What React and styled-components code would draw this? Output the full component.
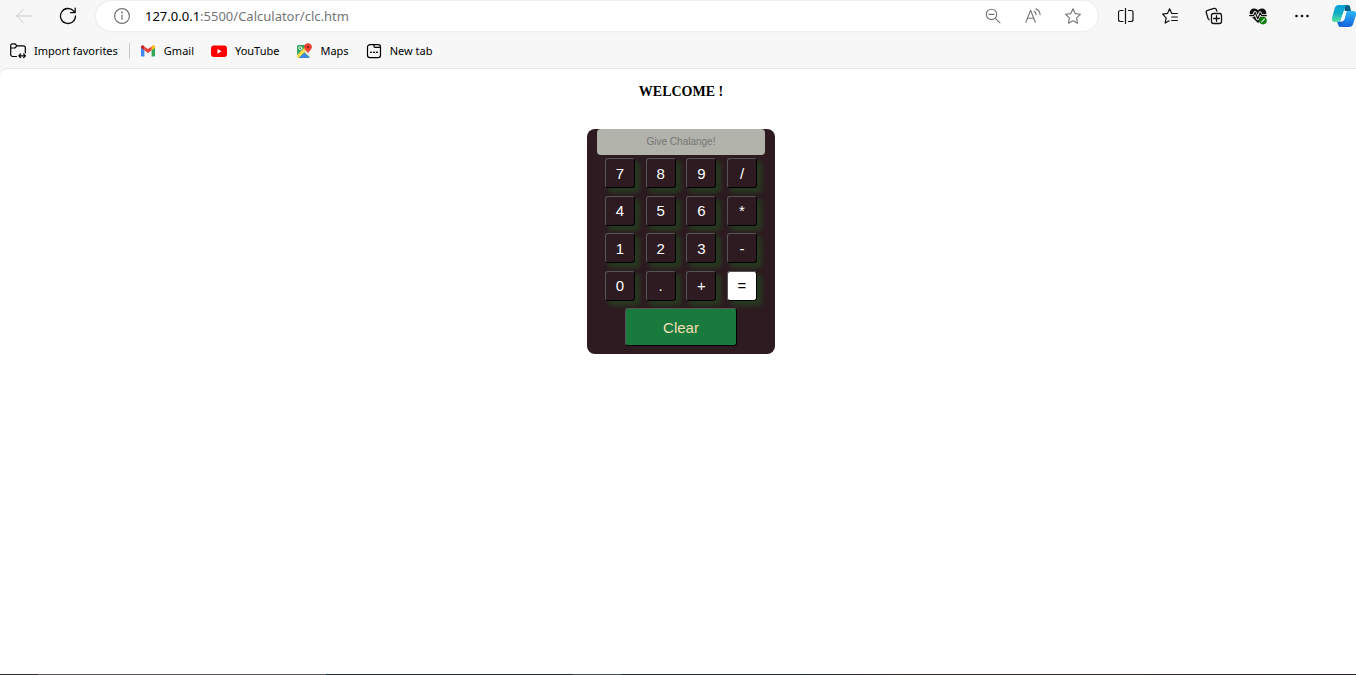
import React, { useState } from "react";
import styled, { createGlobalStyle, css } from "styled-components";

const GlobalStyle = createGlobalStyle`
  *, *::before, *::after { box-sizing: border-box; }
  html, body { margin: 0; height: 100%; }
  #root { height: 100%; }
  button, input { font: inherit; color: inherit; }
`;

const uiFont = css`
  font-family: "Segoe UI", "Noto Sans", "Open Sans", sans-serif;
`;

const Browser = styled.div`
  ${uiFont}
  min-height: 100%;
  display: flex;
  flex-direction: column;
  background: #f7f7f7;
  color: #000;
  overflow: hidden;
`;

const Toolbar = styled.header`
  display: flex;
  align-items: center;
  height: 32px;
  padding-left: 2px;
`;

const IconButton = styled.button`
  display: flex;
  align-items: center;
  justify-content: center;
  flex: none;
  width: ${(p) => p.$width || 44}px;
  height: 28px;
  padding: 0;
  border: 0;
  background: none;
  color: ${(p) => p.$color || "#111"};
`;

const AddressBar = styled.div`
  display: flex;
  align-items: center;
  flex: 1;
  min-width: 0;
  height: 30px;
  margin: 0 6px;
  padding: 0 5px 0 17px;
  border-radius: 15px;
  background: #fff;
  box-shadow: 0 0 3px rgba(0, 0, 0, 0.1);
`;

const Url = styled.a`
  flex: 1;
  min-width: 0;
  margin-left: 14px;
  font-size: 13px;
  line-height: 18px;
  color: #757575;
  text-decoration: none;
  white-space: nowrap;
`;

const Host = styled.span`
  color: #000;
`;

const CopilotButton = styled(IconButton)`
  width: 32px;
  padding-left: 8px;
`;

const Favorites = styled.nav`
  display: flex;
  align-items: center;
  gap: 17px;
  height: 36px;
  padding: 2px 10px 0;
`;

const Favorite = styled.a`
  display: flex;
  align-items: center;
  gap: 8px;
  font-size: 11px;
  line-height: 16px;
  color: #000;
  text-decoration: none;
  white-space: nowrap;
`;

const Divider = styled.span`
  width: 1px;
  height: 16px;
  margin: 0 -7px 0 -6px;
  background: #c8c8c8;
`;

const Page = styled.main`
  flex: 1;
  display: flex;
  flex-direction: column;
  align-items: center;
  padding: 15px 0 24px 6px;
  border-top: 1px solid #e6e6e6;
  border-top-left-radius: 8px;
  background: #fff;
`;

const Welcome = styled.h1`
  margin: 0 0 29px;
  font: bold 14px/16px "Liberation Serif", "Times New Roman", serif;
`;

const Calculator = styled.form`
  display: flex;
  flex-direction: column;
  align-items: center;
  width: 188px;
  padding-bottom: 8px;
  border-radius: 8px;
  background: #2d1b21;
  font-family: "Liberation Sans", Arial, sans-serif;
`;

const Display = styled.input`
  width: 168px;
  height: 26px;
  padding: 0 4px 2px;
  border: 0;
  border-radius: 4px;
  background: #b1b2aa;
  color: #222;
  font-size: 10px;
  text-align: center;
  outline: none;
  &::placeholder {
    color: #757575;
    opacity: 1;
  }
`;

const Keypad = styled.div`
  display: grid;
  grid-template-columns: repeat(4, 30px);
  grid-auto-rows: 30px;
  justify-content: space-between;
  align-content: space-between;
  width: 152px;
  height: 143px;
  margin: 3px 0 7px;
`;

const Key = styled.button`
  padding: 1px 0 0;
  border: 1px solid;
  border-color: #555 #000 #000 #555;
  border-radius: 3px;
  background: ${(p) => (p.$light ? "#fff" : "#2d1b21")};
  color: ${(p) => (p.$light ? "#000" : "#fff")};
  box-shadow: 4px 4px 4px 1px #273820;
  font-size: 15px;
  line-height: 18px;
`;

const ClearKey = styled(Key)`
  width: 112px;
  height: 38px;
  background: #187a3d;
  color: #f5deb3;
  box-shadow: none;
`;

const Taskbar = styled.footer`
  height: 1px;
  background: linear-gradient(
    90deg,
    #302c2e 0 38px,
    #5b5859 38px 326px,
    #1d2c30 326px 573px,
    #455257 573px 621px,
    #1d2c30 621px 800px,
    #38262a 900px 1120px,
    #242126 100%
  );
`;

function Icon({ size = 16, box = 16, children, ...rest }) {
  return (
    <svg
      width={size}
      height={size}
      viewBox={`0 0 ${box} ${box}`}
      fill="none"
      stroke="currentColor"
      strokeWidth="1"
      strokeLinecap="round"
      strokeLinejoin="round"
      aria-hidden="true"
      {...rest}
    >
      {children}
    </svg>
  );
}

const BackIcon = () => (
  <Icon>
    <path d="M15.5 8H.8M7.2 1.5.7 8l6.5 6.5" />
  </Icon>
);

const RefreshIcon = () => (
  <Icon size={18} box={18} strokeWidth="1.3">
    <path d="M16.5 9A7.5 7.5 0 1 1 14.6 4L16 5.5M16.2 1.2v4.5h-4.6" />
  </Icon>
);

const InfoIcon = () => (
  <Icon size={18} box={18} stroke="#757575" strokeWidth="1.2">
    <circle cx="9" cy="9" r="7.4" />
    <path d="M9 8.2v4.2" />
    <circle cx="9" cy="5.6" r=".4" fill="#757575" />
  </Icon>
);

const ZoomOutIcon = () => (
  <Icon strokeWidth="1.1">
    <circle cx="6.5" cy="6.4" r="5.2" />
    <path d="m10.4 10.3 4.6 4.5M4 6.4h5" />
  </Icon>
);

const ReadAloudIcon = () => (
  <Icon strokeWidth="1.1">
    <path d="m.9 14.2 4.7-12 4.7 12M2.5 10.2h6.2M9.2 3.3c1.3.8 1.8 1.8 1.9 3.3M11 .8c2.6 1.5 4 3.6 4.1 6" />
  </Icon>
);

const StarIcon = () => (
  <Icon strokeWidth="1.1">
    <path d="m8 .8 2.2 4.8 5.2.7-3.8 3.6.9 5.3L8 12.7l-4.5 2.5.9-5.3L.6 6.3l5.2-.7L8 .8Z" />
  </Icon>
);

const SplitIcon = () => (
  <Icon strokeWidth="1.2">
    <path d="M7.5 .5v15M5 2.5H2.5C1.3 2.5.5 3.3.5 4.5v7c0 1.2.8 2 2 2H5M10.500 2.500h2.500c1.200 0 2 .8 2 2v7c0 1.200-.8 2-2 2h-2.500" />
  </Icon>
);

const FavoritesIcon = () => (
  <Icon strokeWidth="1.2">
    <path d="M9.700 5.200 7.600.8 5.500 5.400.6 6.200l3.500 3.600-.9 5.300 4-2.300M9.700 5.500h5.700M9.700 9h5.700M9.700 12.500h5.700" />
  </Icon>
);

const CollectionsIcon = () => (
  <Icon size={18} box={18} strokeWidth="1.3">
    <rect x="6.500" y="6.500" width="10" height="10" rx="2" />
    <path d="M11.500 8.700v5.600M8.700 11.500h5.600M4.100 12.600A3 3 0 0 1 2.600 10L1.300 5.600c-.3-1.100.2-1.900 1.300-2.200l6.500-2c1.100-.3 2 .2 2.300 1.200l.5 1.600" />
  </Icon>
);

const EssentialsIcon = () => (
  <Icon size={18} box={18} stroke="none">
    <path
      d="M9 16 2 9.200C-.5 6.600.7 2.400 4.200 1.600 6.100 1.100 7.900 1.800 9 3.300c1.100-1.500 2.900-2.200 4.800-1.700 3.500.8 4.700 5 2.200 7.600L9 16Z"
      fill="#111"
    />
    <path d="M0 8.800h4.200l1.900-3.300 2.600 6.300 2.400-6 1.500 3H18" stroke="#f7f7f7" strokeWidth="3" />
    <path d="M.6 8.600h3.900l1.700-3.100 2.600 6.300 2.400-6 1.500 2.800h4.700" stroke="#111" strokeWidth="1.200" />
    <circle cx="14" cy="13.600" r="3.800" fill="#107c10" />
    <path d="m12.700 14.800 2.700-2.700" stroke="#d6efd6" strokeWidth="1.200" />
  </Icon>
);

const MoreIcon = () => (
  <Icon stroke="none" fill="currentColor">
    <circle cx="2.500" cy="8" r="1.300" />
    <circle cx="8" cy="8" r="1.300" />
    <circle cx="13.500" cy="8" r="1.300" />
  </Icon>
);

const CopilotIcon = () => (
  <Icon size={24} box={24} stroke="none">
    <defs>
      <linearGradient id="copilotLeft" x1="0" y1="0" x2="0" y2="1">
        <stop stopColor="#0c9fdc" />
        <stop offset=".5" stopColor="#13aec4" />
        <stop offset="1" stopColor="#5be39a" />
      </linearGradient>
      <linearGradient id="copilotRight" x1="0" y1="0" x2="0" y2="1">
        <stop stopColor="#2cb9f4" />
        <stop offset="1" stopColor="#1461dd" />
      </linearGradient>
    </defs>
    <path d="M12 1h4c1.200 0 1.700.7 2 1.800L19.300 8H13Z" fill="#0b5f86" />
    <path d="M7 1h8.500c-1.500.4-2.200 1.500-2.700 3L9 15.500C8.400 17.300 7.300 18 5.500 18H3C.7 18-.6 16.500 0 14L2.800 4C3.400 2 4.800 1 7 1Z" fill="url(#copilotLeft)" />
    <path d="M5 18c2 0 3.200-.5 4-2.500h5L11.500 20c-.6 2-1.500 3-3 3-1.200 0-1.800-.7-2.100-1.800Z" fill="#1767d2" />
    <path d="M16 7h5c2.300 0 3.600 1.500 3 4l-2.900 9c-.6 2-2.100 3-4.300 3H8.500c1.500-.4 2.200-1.500 2.700-3L13.800 10c.5-2 .8-3 2.200-3Z" fill="url(#copilotRight)" />
    <path d="M11.400 8.500c.3-1 .9-1.500 2-1.500H16c-1.400 0-1.700 1-2.200 3l-1.600 5.500c-.4 1.200-1 1.700-2 1.900H7.600c.7-.5 1.100-1.100 1.400-1.900Z" fill="#fff" />
  </Icon>
);

const ImportIcon = () => (
  <Icon strokeWidth="1.2">
    <path d="M6.500 13.500H2.700A2 2 0 0 1 .7 11.500v-9a1.600 1.600 0 0 1 1.600-1.700h2.500L7 2.800h6.300a2 2 0 0 1 2 2v5M.9 5h4L7 2.800M9 12.800h6.300M10.500 11 8.800 12.800l1.700 1.800M13.700 11l1.700 1.800-1.700 1.800" />
  </Icon>
);

const GmailIcon = () => (
  <Icon stroke="none">
    <path d="M1 4.500v8c0 .6.400 1 1 1h2.400V7L1 4.500Z" fill="#4285f4" />
    <path d="M15 4.500v8c0 .6-.4 1-1 1h-2.400V7L15 4.500Z" fill="#34a853" />
    <path d="M11.600 3.500V7.300L15 4.800V4c0-1.400-1.500-2.100-2.600-1.300Z" fill="#fbbc04" />
    <path d="M4.400 7.300V3.400L8 6.100l3.600-2.700v3.900L8 10 4.400 7.300Z" fill="#ea4335" />
    <path d="M1 4v.8l3.400 2.500V3.400l-.8-.7C2.500 1.900 1 2.600 1 4Z" fill="#c5221f" />
  </Icon>
);

const YouTubeIcon = () => (
  <Icon stroke="none">
    <rect y="2.500" width="16" height="11.500" rx="3" fill="#f00" />
    <path d="m6.500 5.900 4.100 2.400-4.100 2.400V5.900Z" fill="#fff" />
  </Icon>
);

const MapsIcon = () => (
  <Icon stroke="none">
    <rect x="1" y="2" width="13" height="13" rx="1.500" fill="#34a460" />
    <path d="M1 14V12L11 2l3 3v1L8.200 9.500 2.600 15H2c-.6 0-1-.4-1-1Z" fill="#fddc4b" />
    <path d="m8.100 9.100 5.900 5.400V5.500L8.100 9.100Z" fill="#e8eaed" />
    <path d="m3 15 5.100-5 5.100 5H3Z" fill="#4285f4" />
    <circle cx="4.300" cy="5.200" r="1.500" stroke="#fff" strokeWidth=".9" />
    <path d="M12 .3c2.200 0 3.900 1.600 3.900 3.700 0 2.700-3 3.600-3.900 6.500-.9-2.900-3.900-3.800-3.900-6.500C8.100 1.900 9.800.3 12 .3Z" fill="#ea4335" />
    <circle cx="12" cy="4" r="1.300" fill="#9c221a" />
  </Icon>
);

const NewTabIcon = () => (
  <Icon strokeWidth="1.200">
    <rect x="1.500" y="1.600" width="13" height="13" rx="2.400" />
    <path d="M8 1.800v1.500c0 .6.400 1 1 1h5.300" />
    <path d="M4.700 9.300h.6M7.700 9.300h.6M10.700 9.300h.6" strokeWidth="1.500" />
  </Icon>
);

const favorites = [
  { label: "Gmail", icon: GmailIcon },
  { label: "YouTube", icon: YouTubeIcon },
  { label: "Maps", icon: MapsIcon },
  { label: "New tab", icon: NewTabIcon },
];

const addressActions = [
  { label: "Zoom out", icon: ZoomOutIcon },
  { label: "Read aloud", icon: ReadAloudIcon },
  { label: "Add to favorites", icon: StarIcon },
];

const toolbarActions = [
  { label: "Split screen", icon: SplitIcon },
  { label: "Favorites", icon: FavoritesIcon },
  { label: "Collections", icon: CollectionsIcon },
  { label: "Browser essentials", icon: EssentialsIcon },
  { label: "Settings and more", icon: MoreIcon },
];

const keys = ["7", "8", "9", "/", "4", "5", "6", "*", "1", "2", "3", "-", "0", ".", "+", "="];

const precedence = { "+": 1, "-": 1, "*": 2, "/": 2 };

function evaluate(text) {
  const tokens = text.match(/\d*\.?\d+|[-+*/]/g) || [];
  const values = [];
  const operators = [];
  const apply = () => {
    const op = operators.pop();
    const b = values.pop();
    const a = values.pop() ?? 0;
    values.push(op === "+" ? a + b : op === "-" ? a - b : op === "*" ? a * b : a / b);
  };
  tokens.forEach((token) => {
    if (precedence[token]) {
      while (operators.length && precedence[operators[operators.length - 1]] >= precedence[token]) apply();
      operators.push(token);
    } else {
      values.push(Number(token));
    }
  });
  while (operators.length) apply();
  return Number.isFinite(values[0]) ? String(values[0]) : "";
}

export default function App() {
  const [value, setValue] = useState("");

  const press = (key) => setValue((v) => (key === "=" ? evaluate(v) : v + key));

  return (
    <>
      <GlobalStyle />
      <Browser>
        <Toolbar>
          <IconButton type="button" aria-label="Back" $color="#c9c9c9">
            <BackIcon />
          </IconButton>
          <IconButton type="button" aria-label="Refresh">
            <RefreshIcon />
          </IconButton>
          <AddressBar>
            <InfoIcon />
            <Url href="#">
              <Host>127.0.0.1</Host>:5500/Calculator/clc.htm
            </Url>
            {addressActions.map(({ label, icon: Glyph }) => (
              <IconButton key={label} type="button" aria-label={label} $width={40} $color="#757575">
                <Glyph />
              </IconButton>
            ))}
          </AddressBar>
          {toolbarActions.map(({ label, icon: Glyph }) => (
            <IconButton key={label} type="button" aria-label={label}>
              <Glyph />
            </IconButton>
          ))}
          <CopilotButton type="button" aria-label="Copilot">
            <CopilotIcon />
          </CopilotButton>
        </Toolbar>
        <Favorites aria-label="Favorites bar">
          <Favorite href="#">
            <ImportIcon />
            Import favorites
          </Favorite>
          <Divider />
          {favorites.map(({ label, icon: Glyph }) => (
            <Favorite key={label} href="#">
              <Glyph />
              {label}
            </Favorite>
          ))}
        </Favorites>
        <Page>
          <Welcome>WELCOME !</Welcome>
          <Calculator onSubmit={(e) => e.preventDefault()}>
            <Display
              type="text"
              aria-label="Calculation"
              placeholder="Give Chalange!"
              value={value}
              onChange={(e) => setValue(e.target.value)}
            />
            <Keypad>
              {keys.map((key) => (
                <Key key={key} type="button" $light={key === "="} onClick={() => press(key)}>
                  {key}
                </Key>
              ))}
            </Keypad>
            <ClearKey type="button" onClick={() => setValue("")}>
              Clear
            </ClearKey>
          </Calculator>
        </Page>
        <Taskbar />
      </Browser>
    </>
  );
}
